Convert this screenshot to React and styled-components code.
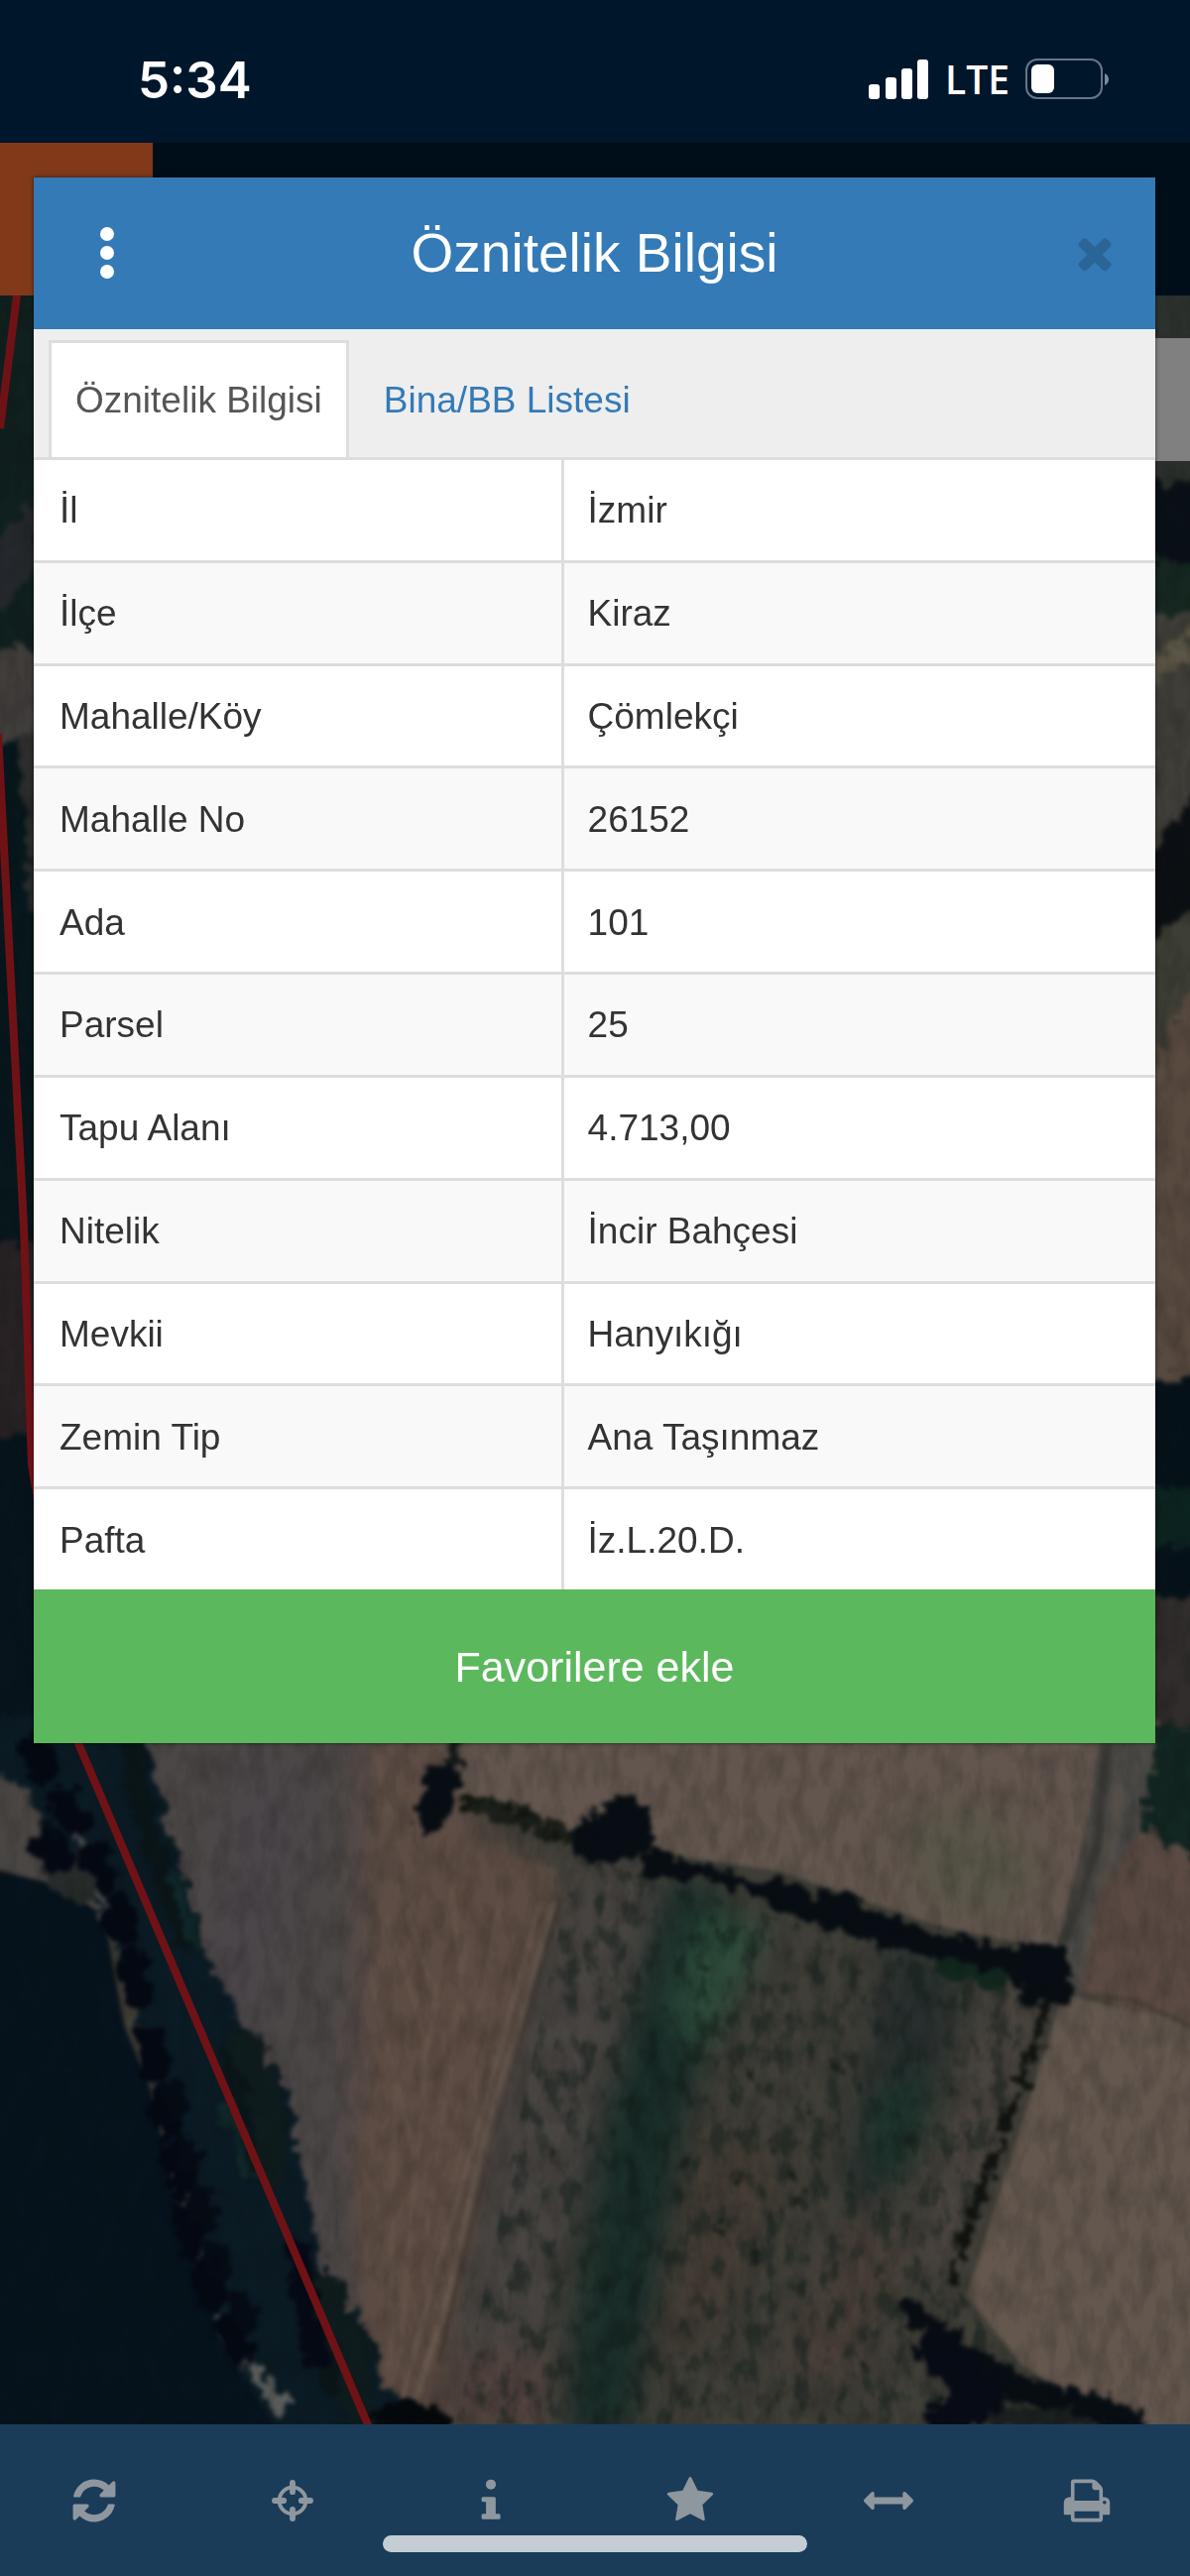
import React from "react";
import styled, { createGlobalStyle } from "styled-components";

const GlobalStyle = createGlobalStyle`
  * {
    box-sizing: border-box;
  }
  body {
    margin: 0;
    background: #00162b;
    font-family: "Liberation Sans", Arial, Helvetica, sans-serif;
  }
  button {
    font-family: inherit;
    border: 0;
    padding: 0;
    background: none;
    cursor: pointer;
  }
`;

const Page = styled.div`
  position: relative;
  display: flex;
  flex-direction: column;
  min-height: 100vh;
`;

const StatusBar = styled.header`
  display: flex;
  align-items: center;
  justify-content: space-between;
  height: 144px;
  padding: 16px 82px 0 139px;
  background: #00162b;
  color: #fff;
`;

const Clock = styled.time`
  font-family: Inter, sans-serif;
  font-size: 51px;
  font-weight: 600;
`;

const StatusIcons = styled.div`
  display: flex;
  align-items: center;
  gap: 16px;
`;

const Network = styled.span`
  font-family: "Open Sans", sans-serif;
  font-size: 39px;
  line-height: 48px;
  font-weight: 600;
`;

const NavBar = styled.div`
  height: 154px;
  background: #000e1a;
`;

const NavTile = styled.div`
  width: 154px;
  height: 100%;
  background: #81391a;
`;

const MapArea = styled.main`
  position: relative;
  flex: 1;
  display: flex;
  justify-content: flex-end;
  overflow: hidden;
  background: #0a161b;
`;

const MapDrawing = styled.svg`
  position: absolute;
  inset: 0;
  width: 100%;
  height: 100%;
  color-interpolation-filters: sRGB;
`;

const MapControl = styled.div`
  position: relative;
  width: 124px;
  height: 124px;
  margin-top: 43px;
  background: #808080;
`;

const Toolbar = styled.nav`
  position: relative;
  display: flex;
  justify-content: space-between;
  height: 153px;
  padding: 0 79px 0 70px;
  background: #1a3c59;
`;

const ToolButton = styled.button`
  display: flex;
  align-items: center;
  justify-content: center;
  color: #8f979e;
`;

const HomeIndicator = styled.div`
  position: absolute;
  left: 50%;
  bottom: 24px;
  width: 428px;
  height: 17px;
  margin-left: -214px;
  border-radius: 9px;
  background: #c5cdd4;
`;

const Overlay = styled.div`
  position: absolute;
  inset: 0;
  padding: 179px 35px 0 34px;
`;

const Dialog = styled.section`
  background: #fff;
  box-shadow: 0 0 4px rgba(0, 0, 0, 0.6);
`;

const DialogHeader = styled.div`
  display: grid;
  grid-template-columns: 1fr auto 1fr;
  align-items: center;
  height: 153px;
  padding: 0 30px 2px;
  background: #337ab7;
`;

const DialogTitle = styled.h1`
  margin: 0;
  color: #fff;
  font-size: 55px;
  font-weight: 400;
`;

const MenuButton = styled.button`
  display: flex;
  justify-content: center;
  width: 88px;
`;

const CloseButton = styled.button`
  display: flex;
  justify-content: center;
  justify-self: end;
  width: 62px;
  color: #2b6597;
`;

const Tabs = styled.div`
  display: flex;
  align-items: stretch;
  gap: 8px;
  height: 129px;
  padding: 11px 15px 0;
  background: #eee;
`;

const Tab = styled.button`
  padding: 0 24px;
  border: 3px solid ${(p) => (p.$active ? "#ddd" : "transparent")};
  border-bottom: 0;
  background: ${(p) => (p.$active ? "#fff" : "transparent")};
  color: ${(p) => (p.$active ? "#555" : "#337ab7")};
  font-size: 37px;
`;

const Table = styled.table`
  width: 100%;
  height: 1142px;
  table-layout: fixed;
  border-collapse: separate;
  border-spacing: 0;
  color: #333;
  font-size: 37px;
  line-height: 42px;
  text-align: left;
`;

const Row = styled.tr`
  &:nth-child(even) {
    background: #f9f9f9;
  }
`;

const Label = styled.th`
  width: 47%;
  padding: 2px 24px 0 26px;
  border-top: 3px solid #ddd;
  font-weight: 400;
`;

const Value = styled.td`
  padding: 2px 24px 0;
  border-top: 3px solid #ddd;
  border-left: 3px solid #ddd;
`;

const FavoriteButton = styled.button`
  display: block;
  width: 100%;
  height: 155px;
  padding-top: 2px;
  background: #5cb85c;
  color: #fff;
  font-size: 43px;
`;

const rows = [
  ["İl", "İzmir"],
  ["İlçe", "Kiraz"],
  ["Mahalle/Köy", "Çömlekçi"],
  ["Mahalle No", "26152"],
  ["Ada", "101"],
  ["Parsel", "25"],
  ["Tapu Alanı", "4.713,00"],
  ["Nitelik", "İncir Bahçesi"],
  ["Mevkii", "Hanyıkığı"],
  ["Zemin Tip", "Ana Taşınmaz"],
  ["Pafta", "İz.L.20.D."],
];

const Icon = ({ children }) => (
  <svg width="50" height="50" viewBox="0 0 1792 1792" fill="currentColor" aria-hidden="true">
    {children}
  </svg>
);

const tools = [
  {
    label: "Yenile",
    icon: (
      <path d="M1639 1056q0 5-1 7-64 268-268 434.500t-478 166.500q-146 0-282.500-55t-243.500-157l-129 129q-19 19-45 19t-45-19-19-45v-448q0-26 19-45t45-19h448q26 0 45 19t19 45-19 45l-137 137q71 66 161 102t187 36q134 0 250-65t186-179q11-17 53-117 8-23 30-23h192q13 0 22.500 9.500t9.500 22.500zm25-800v448q0 26-19 45t-45 19h-448q-26 0-45-19t-19-45 19-45l138-138q-148-137-349-137-134 0-250 65t-186 179q-11 17-53 117-8 23-30 23h-199q-13 0-22.500-9.500t-9.500-22.500v-7q65-268 270-434.500t480-166.500q146 0 284 55.500t245 156.500l130-129q19-19 45-19t45 19 19 45z" />
    ),
  },
  {
    label: "Konum",
    icon: (
      <g stroke="currentColor">
        <circle cx="896" cy="896" r="480" fill="none" strokeWidth="140" />
        <path
          d="M896 250v330M896 1212v330M250 896h330M1212 896h330"
          strokeWidth="210"
          strokeLinecap="round"
        />
      </g>
    ),
  },
  {
    label: "Bilgi",
    icon: (
      <>
        <circle cx="896" cy="310" r="180" />
        <path d="M1240 1430v80q0 56-56 56h-570q-56 0-56-56v-80q0-56 56-56h106v-430h-106q-56 0-56-56v-74q0-56 56-56h400q56 0 56 56v560h114q56 0 56 56z" />
      </>
    ),
  },
  {
    label: "Favoriler",
    icon: (
      <path d="M1728 647q0 22-26 48l-363 354 86 500q1 7 1 20 0 21-10.500 35.500t-30.500 14.500q-19 0-40-12l-449-236-449 236q-22 12-40 12-21 0-31.500-14.500t-10.500-35.500q0-6 2-20l86-500-364-354q-25-27-25-48 0-37 56-46l502-73 225-455q19-41 49-41t49 41l225 455 502 73q56 9 56 46z" />
    ),
  },
  {
    label: "Ölçüm",
    icon: (
      <path d="M1792 896q0 26-19 45l-256 256q-19 19-45 19t-45-19-19-45v-128h-1024v128q0 26-19 45t-45 19-45-19l-256-256q-19-19-19-45t19-45l256-256q19-19 45-19t45 19 19 45v128h1024v-128q0-26 19-45t45-19 45 19l256 256q19 19 19 45z" />
    ),
  },
  {
    label: "Yazdır",
    icon: (
      <path d="M448 1536h896v-256h-896v256zm0-640h896v-384h-160q-40 0-68-28t-28-68v-160h-640v640zm1152 64q0-26-19-45t-45-19-45 19-19 45 19 45 45 19 45-19 19-45zm128 0v416q0 13-9.500 22.500t-22.500 9.500h-224v160q0 40-28 68t-68 28h-960q-40 0-68-28t-28-68v-160h-224q-13 0-22.500-9.500t-9.500-22.500v-416q0-79 56.500-135.500t135.500-56.500h64v-544q0-40 28-68t68-28h672q40 0 88 20t76 48l152 152q28 28 48 76t20 88v256h64q79 0 135.500 56.500t56.500 135.500z" />
    ),
  },
];

const Signal = () => (
  <svg width="62" height="40" viewBox="0 0 62 40" fill="#fff" aria-hidden="true">
    <rect x="1" y="25" width="11" height="15" rx="3" />
    <rect x="18" y="18" width="11" height="22" rx="3" />
    <rect x="34" y="9" width="11" height="31" rx="3" />
    <rect x="50" y="0" width="11" height="40" rx="3" />
  </svg>
);

const Battery = () => (
  <svg width="84" height="42" viewBox="0 0 84 42" aria-hidden="true">
    <rect x="1" y="1" width="76" height="39" rx="11" fill="none" stroke="#66758a" strokeWidth="2" />
    <rect x="6" y="6" width="23" height="29" rx="6" fill="#fff" />
    <path d="M80 15q4 2 4 6t-4 6z" fill="#7d8a9a" />
  </svg>
);

// satellite imagery: fields, hedgerows and the parcel boundary
const Satellite = () => (
  <MapDrawing viewBox="0 298 1200 2147" preserveAspectRatio="xMidYMid slice" aria-hidden="true">
    <defs>
      <filter id="soft" x="-5%" y="-5%" width="110%" height="110%">
        <feTurbulence type="fractalNoise" baseFrequency="0.07" numOctaves="4" seed="4" />
        <feDisplacementMap in="SourceGraphic" scale="28" xChannelSelector="R" yChannelSelector="G" />
        <feGaussianBlur stdDeviation="2" />
      </filter>
      <filter id="haze" x="-30%" y="-30%" width="160%" height="160%">
        <feGaussianBlur stdDeviation="16" />
      </filter>
      <filter id="edge">
        <feGaussianBlur stdDeviation="2" />
      </filter>
      <filter id="grain" x="0" y="0" width="100%" height="100%">
        <feTurbulence type="fractalNoise" baseFrequency="0.06 0.03" numOctaves="4" seed="9" />
        <feColorMatrix values="0 0 0 0 0.04  0 0 0 0 0.05  0 0 0 0 0.05  1.6 0 0 0 -0.6" />
      </filter>
      <filter id="foliage" x="0" y="0" width="100%" height="100%">
        <feTurbulence type="fractalNoise" baseFrequency="0.06 0.035" numOctaves="4" seed="21" />
        <feColorMatrix values="0 0 0 0 0.07  0 0 0 0 0.12  0 0 0 0 0.1  0 4 0 0 -1.9" />
        <feComposite in2="SourceGraphic" operator="in" />
        <feGaussianBlur stdDeviation="1" />
      </filter>
    </defs>

    {/* strip left of the dialog */}
    <g filter="url(#soft)">
      <path d="M-20 280h80v400h-80z" fill="#10201f" />
      <path d="M-20 560L40 500v70L-20 640z" fill="#25292d" />
      <path d="M-20 655h80v95h-80z" fill="#403d3b" />
      <path d="M-20 750h80v510h-80z" fill="#07171c" />
      <path d="M20 740h40v180h-30z" fill="#2c2d2c" />
      <path d="M-20 1255h80v200h-80z" fill="#282225" />
      <path d="M-20 1450h80v340h-80z" fill="#07141c" />
    </g>

    {/* strip right of the dialog */}
    <g filter="url(#soft)">
      <path d="M1140 280h80v210h-80z" fill="#2c312d" />
      <path d="M1140 485h80v80h-80z" fill="#091017" />
      <path d="M1140 565h80v55h-80z" fill="#152720" />
      <path d="M1140 620h80v230h-80z" fill="#403e38" />
      <path d="M1150 675l50-40v30l-40 25z" fill="#5b5545" />
      <path d="M1140 880l70-80v120l-70 60z" fill="#0c1014" />
      <path d="M1140 960l80-50v180l-80 30z" fill="#3d3e34" />
      <path d="M1140 1120l80-160v430h-80z" fill="#594a40" />
      <path d="M1140 1390h80v250h-80z" fill="#061219" />
      <path d="M1140 1500h80v60h-80z" fill="#0c2420" />
      <path d="M1140 1610h80v170h-80z" fill="#302d2c" />
    </g>

    {/* ground under the lower half */}
    <path d="M0 1745h1200v700H0z" fill="#3f3e37" />
    <path d="M100 1740h360v140l-60 565H330z" fill="#4c4747" />
    <g filter="url(#haze)">
      <path d="M365 1740h100l20 100 80 60-130 560h-60l-20-280z" fill="#5d4d45" />
      <path d="M250 1760l70 60-70 280-60-100z" fill="#4b4649" />
    </g>
    <path
      d="M430 1850l132 35-55 250-75 310h-55l-20-250z"
      fill="#5d4c43"
      opacity="0.7"
      filter="url(#edge)"
    />
    <g stroke="#7c6b5d" fill="none" opacity="0.5" filter="url(#edge)">
      <path d="M560 1918l-72 240-42 180-30 90" strokeWidth="6" />
      <path d="M545 1918l-66 240-44 150-34 130" strokeWidth="4" />
    </g>
    <g stroke="#7c6b5d" strokeWidth="4" fill="none" opacity="0.25" filter="url(#edge)">
      <path d="M505 1910l-22 120M390 1930l40 130-12 160M410 1925l32 100M470 1960l-20 160-20 140M380 1770l12 60M440 2000l-25 220-12 170M500 2020l-44 190M370 1980l50 200M455 1900l15 140M400 2060l-8 330" />
    </g>
    <path
      d="M566 1915l-70 250-54 220"
      stroke="#352d27"
      strokeWidth="5"
      fill="none"
      opacity="0.6"
      filter="url(#edge)"
    />

    {/* overgrown field in the middle */}
    <g filter="url(#haze)">
      <path d="M590 1870l80 20-80 290-60 255h-80l50-300z" fill="#484441" />
      <path d="M675 1890l65 20-50 250-55 300h-70l40-300z" fill="#1a2e2a" />
      <path d="M700 1930l75 10-60 130-40-30z" fill="#2c4c3a" />
      <path d="M900 1950l70 50-40 160-40 60h-40z" fill="#272f2e" />
      <path d="M1010 1990l40 20-80 280-50-20z" fill="#4c4540" />
      <path d="M700 2130l90 60-60 150-80 60z" fill="#453d35" />
      <path d="M850 2230l70 40-60 140-80-20z" fill="#483f38" />
      <path d="M880 2120l60-30-20 90-40 20z" fill="#1c362e" />
      <path d="M450 2370h110v90H420z" fill="#51433e" />
    </g>
    <path d="M580 1870l480 150-100 280 100 145H460z" fill="#fff" filter="url(#foliage)" opacity="0.5" />

    {/* bare fields */}
    <g filter="url(#edge)">
      <path d="M470 1735h645l-22 120-28 112-120-25-160-55-190-28-135-52z" fill="#62564e" />
      <path d="M1110 1735h60l-20 110-30 120-30 60-30-20 34-140z" fill="#4b4946" />
      <path d="M1130 1800l-14 80-26 130" stroke="#544e47" strokeWidth="12" fill="none" />
      <path
        d="M1118 1758l-14 110-30 90"
        stroke="#35352f"
        strokeWidth="10"
        fill="none"
        opacity="0.7"
      />
      <path d="M1150 1845l60 25v180l-120-40 20-100z" fill="#5a4a43" />
      <path d="M1072 2012l138 30v413h-70l-110-70-55-70z" fill="#63574e" />
      <path d="M1085 2010l60 8 65 30" stroke="#473f38" strokeWidth="4" fill="none" />
    </g>
    <path d="M900 1840l90-20 60 60-40 60-70-20z" fill="#5a5649" filter="url(#haze)" />
    <path d="M1164 1740h50v138l-62-34z" fill="#122622" filter="url(#soft)" />

    {/* pond and wooded bank */}
    <g filter="url(#soft)">
      <path d="M-20 1780h60l70 90 20 100-60-60-90-20z" fill="#4a4643" />
      <path d="M-20 1730h160l30 110 38 130 40 80 42 60 14 80 30 120 34 35 20 60 80 60H280l-60-110-36-120-30-140-30-120-40-70L20 1800l-50-25z" fill="#0b1b24" />
    </g>
    <path
      d="M-10 1884l70 18 45 30 20 110 25 60 30 120 30 70 10 60 60 103H-10z"
      fill="#06131c"
      filter="url(#edge)"
    />
    <g filter="url(#soft)" fill="none" strokeLinecap="round">
      <path d="M60 1880l24 22" stroke="#272b2a" strokeWidth="40" />
      <path d="M60 1820l35 60 12 50M140 2065l15 35M185 2210l8 20M205 2280l15 50 15 20" stroke="#4d5253" strokeWidth="10" />
      <path d="M240 2370l42 55" stroke="#5d605e" strokeWidth="16" />
      <path d="M45 1855l20 30M35 1765l55 100 30 60 25 110M150 2060l25 100 20 110 30 70 25 40" stroke="#040812" strokeWidth="30" strokeDasharray="26 34" />
      <path d="M175 2110l20 90 40 110 30 60" stroke="#050b14" strokeWidth="24" strokeDasharray="18 38" />
      <path d="M130 1760l20 90 40 110M230 2070l20 120M320 2300l15 110" stroke="#0a1518" strokeWidth="22" />
      <path d="M245 2060l25 60 5 70M330 2310l25 60 5 60" stroke="#0f1c1d" strokeWidth="32" />
      <path d="M175 1890l20 70M230 2130l20 60" stroke="#10282a" strokeWidth="14" />
      <path d="M300 2270l20 110" stroke="#050915" strokeWidth="24" />
      <path d="M385 2445l20-10 40 8" stroke="#05080b" strokeWidth="26" />
    </g>

    {/* hedgerows */}
    <g filter="url(#soft)" fill="none" stroke="#070d13" strokeLinecap="round" strokeLinejoin="round">
      <path d="M462 1745l-8 50-16 30" stroke="#15191a" strokeWidth="14" />
      <path d="M444 1798l-8 32" strokeWidth="36" />
      <path d="M472 1818l50 14 56 22" stroke="#12160f" strokeWidth="18" strokeDasharray="10 18" />
      <path d="M480 1822l100 30" stroke="#1c201b" strokeWidth="10" />
      <path d="M594 1854l36-24 12 20-30 15z" strokeWidth="38" />
      <path d="M660 1878l66 14 54 20 80 14" strokeWidth="12" />
      <path d="M660 1878l24 6M782 1906l12 4M838 1920l20 4" strokeWidth="26" />
      <path d="M792 1918l70 18 70 24 70 16 60 0" strokeWidth="28" />
      <path d="M1020 1985l44 -2-2 24-20-4" strokeWidth="34" />
      <path d="M950 1984l60 14" stroke="#12281f" strokeWidth="16" />
      <path d="M1056 2025l-32 94-34 90-30 90" stroke="#11130f" strokeWidth="9" strokeDasharray="34 12" />
      <path d="M920 2330l48 40 54 34 50 20" strokeWidth="24" />
      <path d="M945 2370l50 50-40 20" stroke="#070b15" strokeWidth="40" />
      <path d="M1010 2440h90" stroke="#1a1f1f" strokeWidth="20" />
      <path d="M1088 2420l56 24" strokeWidth="24" />
    </g>

    <g fill="#1b1f1a" filter="url(#soft)">
      {[
        [842, 2086], [820, 2130], [760, 2094], [758, 2278], [803, 2194], [712, 1985], [690, 2185],
        [745, 2197], [805, 2218], [918, 2155], [780, 2165], [560, 2170], [726, 2248], [870, 2385],
      ].map(([cx, cy]) => (
        <circle key={`${cx}-${cy}`} cx={cx} cy={cy} r="5" />
      ))}
    </g>

    <path d="M0 298h1200v2147H0z" filter="url(#grain)" opacity="0.25" />

    <g stroke="#6f1216" fill="none">
      <path d="M18 290L0 432" strokeWidth="8" />
      <path d="M-2 740l26 497 8 240 47 281 293 690" strokeWidth="8" />
    </g>
  </MapDrawing>
);

const App = () => {
  return (
    <>
      <GlobalStyle />
      <Page>
        <StatusBar>
          <Clock>5:34</Clock>
          <StatusIcons>
            <Signal />
            <Network>LTE</Network>
            <Battery />
          </StatusIcons>
        </StatusBar>
        <NavBar>
          <NavTile />
        </NavBar>
        <MapArea>
          <Satellite />
          <MapControl />
        </MapArea>
        <Toolbar>
          {tools.map((tool) => (
            <ToolButton key={tool.label} type="button" aria-label={tool.label}>
              <Icon>{tool.icon}</Icon>
            </ToolButton>
          ))}
          <HomeIndicator />
        </Toolbar>

        <Overlay>
          <Dialog role="dialog" aria-labelledby="dialog-title">
            <DialogHeader>
              <MenuButton type="button" aria-label="Menü">
                <svg width="16" height="56" viewBox="0 0 16 56" fill="#fff" aria-hidden="true">
                  <circle cx="8" cy="9" r="7" />
                  <circle cx="8" cy="28" r="7" />
                  <circle cx="8" cy="47" r="7" />
                </svg>
              </MenuButton>
              <DialogTitle id="dialog-title">Öznitelik Bilgisi</DialogTitle>
              <CloseButton type="button" aria-label="Kapat">
                <Icon>
                  <path d="M1490 1322q0 40-28 68l-136 136q-28 28-68 28t-68-28l-294-294-294 294q-28 28-68 28t-68-28l-136-136q-28-28-28-68t28-68l294-294-294-294q-28-28-28-68t28-68l136-136q28-28 68-28t68 28l294 294 294-294q28-28 68-28t68 28l136 136q28 28 28 68t-28 68l-294 294 294 294q28 28 28 68z" />
                </Icon>
              </CloseButton>
            </DialogHeader>
            <Tabs role="tablist">
              <Tab type="button" role="tab" aria-selected="true" $active>
                Öznitelik Bilgisi
              </Tab>
              <Tab type="button" role="tab" aria-selected="false">
                Bina/BB Listesi
              </Tab>
            </Tabs>
            <Table>
              <tbody>
                {rows.map(([label, value]) => (
                  <Row key={label}>
                    <Label scope="row">{label}</Label>
                    <Value>{value}</Value>
                  </Row>
                ))}
              </tbody>
            </Table>
            <FavoriteButton type="button">Favorilere ekle</FavoriteButton>
          </Dialog>
        </Overlay>
      </Page>
    </>
  );
};

export default App;
